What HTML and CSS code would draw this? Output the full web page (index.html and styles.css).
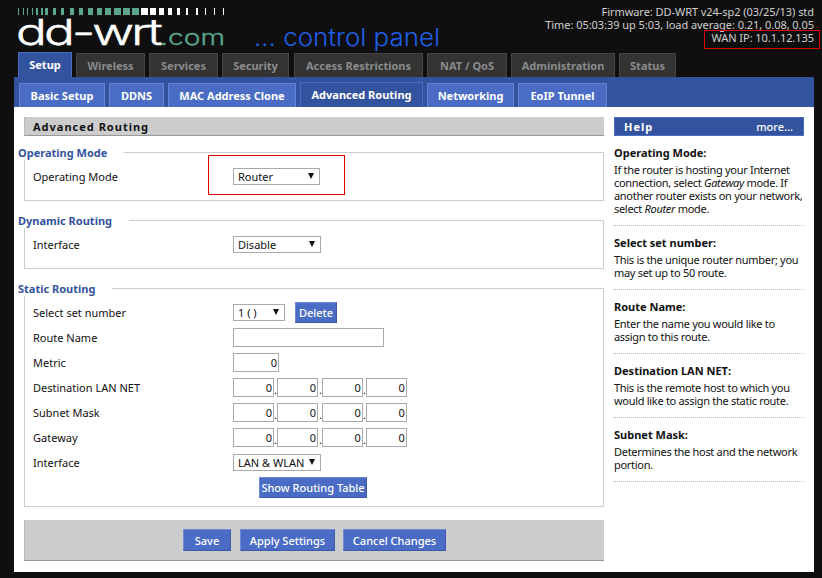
FILE: index.html
```html
<!DOCTYPE html>
<html lang="en">
  <head>
    <meta charset="UTF-8" />
    <title>DD-WRT Advanced Routing</title>
    <link rel="stylesheet" href="styles.css">
  </head>
  <body>
    <div class="wrapper">
      <div class="header">
        <svg class="logo" width="450" height="52" viewBox="0 0 450 52">
          <g fill="#5aa58c">
            <rect x="18" y="8" width="1" height="7"/><rect x="23" y="8" width="1" height="7"/><rect x="27" y="8" width="1" height="7"/><rect x="32" y="8" width="1" height="7"/><rect x="36" y="8" width="2" height="7"/><rect x="41" y="8" width="2" height="7"/><rect x="45" y="8" width="3" height="7"/><rect x="53" y="8" width="3" height="7"/><rect x="61" y="8" width="3" height="7"/><rect x="70" y="8" width="4" height="7"/><rect x="79" y="8" width="4" height="7"/><rect x="88" y="8" width="5" height="7"/><rect x="97" y="8" width="5" height="7"/><rect x="105" y="8" width="6" height="7"/><rect x="114" y="8" width="7" height="7"/><rect x="123" y="8" width="7" height="7"/><rect x="132" y="8" width="7" height="7"/>
          </g>
          <g fill="#fff">
            <rect x="141" y="8" width="7" height="7"/><rect x="150" y="8" width="6" height="7"/><rect x="159" y="8" width="5" height="7"/><rect x="168" y="8" width="4" height="7"/><rect x="177" y="8" width="3" height="7"/><rect x="186" y="8" width="2" height="7"/><rect x="196" y="8" width="2" height="7"/><rect x="205" y="8" width="1" height="7"/><rect x="214" y="8" width="1" height="7"/><rect x="223" y="8" width="1" height="7"/>
          </g>
          <text class="logo-name" x="16" y="45" textLength="144" lengthAdjust="spacingAndGlyphs">dd-wrt</text>
          <text class="logo-com" x="160" y="45" textLength="65" lengthAdjust="spacingAndGlyphs">.com</text>
          <text class="logo-panel" x="254" y="46" textLength="186" lengthAdjust="spacingAndGlyphs">... control panel</text>
        </svg>
        <div class="info">
          <div>Firmware: DD-WRT v24-sp2 (03/25/13) std</div>
          <div>Time: 05:03:39 up 5:03, load average: 0.21, 0.08, 0.05</div>
          <div class="wan">WAN IP: 10.1.12.135</div>
        </div>
      </div>

      <div class="tabs">
        <a class="tab current">Setup</a>
        <a class="tab w69">Wireless</a>
        <a class="tab w69">Services</a>
        <a class="tab w66">Security</a>
        <a class="tab w129">Access Restrictions</a>
        <a class="tab w80">NAT / QoS</a>
        <a class="tab w104">Administration</a>
        <a class="tab w57">Status</a>
      </div>

      <div class="content">
        <div class="subtabs">
          <a class="subtab">Basic Setup</a>
          <a class="subtab">DDNS</a>
          <a class="subtab">MAC Address Clone</a>
          <a class="subtab current">Advanced Routing</a>
          <a class="subtab">Networking</a>
          <a class="subtab">EoIP Tunnel</a>
        </div>

        <div class="panes">
          <div class="main">
            <h2>Advanced Routing</h2>

            <fieldset class="short">
              <legend>Operating Mode</legend>
              <div class="row">
                <span class="label">Operating Mode</span>
                <span class="select s112">Router</span>
                <span class="highlight"></span>
              </div>
            </fieldset>

            <fieldset class="short">
              <legend>Dynamic Routing</legend>
              <div class="row">
                <span class="label">Interface</span>
                <span class="select s88">Disable</span>
              </div>
            </fieldset>

            <fieldset class="static">
              <legend>Static Routing</legend>
              <div class="row">
                <span class="label">Select set number</span>
                <span class="select s52">1 ( )</span>
                <button class="btn delete">Delete</button>
              </div>
              <div class="row">
                <span class="label">Route Name</span>
                <input class="field w151" value="">
              </div>
              <div class="row">
                <span class="label">Metric</span>
                <input class="field w46" value="0">
              </div>
              <div class="row">
                <span class="label">Destination LAN NET</span>
                <span class="ip"><input class="field" value="0">.<input class="field" value="0">.<input class="field" value="0">.<input class="field" value="0"></span>
              </div>
              <div class="row">
                <span class="label">Subnet Mask</span>
                <span class="ip"><input class="field" value="0">.<input class="field" value="0">.<input class="field" value="0">.<input class="field" value="0"></span>
              </div>
              <div class="row">
                <span class="label">Gateway</span>
                <span class="ip"><input class="field" value="0">.<input class="field" value="0">.<input class="field" value="0">.<input class="field" value="0"></span>
              </div>
              <div class="row">
                <span class="label">Interface</span>
                <span class="select s88">LAN &amp; WLAN</span>
              </div>
              <div class="table-btn"><button class="btn">Show Routing Table</button></div>
            </fieldset>

            <div class="footer">
              <button class="btn save">Save</button>
              <button class="btn apply">Apply Settings</button>
              <button class="btn cancel">Cancel Changes</button>
            </div>
          </div>

          <div class="help">
            <div class="help-head"><span>Help</span><a>more...</a></div>
            <dl>
              <dt>Operating Mode:</dt>
              <dd>If the router is hosting your Internet connection, select <em>Gateway</em> mode. If another router exists on your network, select <em>Router</em> mode.</dd>
              <dt>Select set number:</dt>
              <dd>This is the unique router number; you may set up to 50 route.</dd>
              <dt>Route Name:</dt>
              <dd>Enter the name you would like to assign to this route.</dd>
              <dt>Destination LAN NET:</dt>
              <dd>This is the remote host to which you would like to assign the static route.</dd>
              <dt>Subnet Mask:</dt>
              <dd>Determines the host and the network portion.</dd>
            </dl>
          </div>
        </div>
      </div>
    </div>
  </body>
</html>
```

FILE: styles.css
```css
*{
  box-sizing: border-box;
}
html, body{
  height: 100%;
}
body{
  margin: 0;
  background-color: #0f0f0f;
  font-family: "Noto Sans", "DejaVu Sans", sans-serif;
  font-size: 11px;
  color: #111;
  overflow: hidden;
}
.wrapper{
  width: 822px;
  height: 578px;
}

/* header */
.header{
  height: 52px;
  display: flex;
  justify-content: space-between;
}
.logo{
  display: block;
}
.logo text{
  font-family: "Inter", sans-serif;
  font-weight: 300;
}
.logo-name{
  fill: #fff;
  stroke: #fff;
  stroke-width: 0.5px;
  font-size: 36px;
  letter-spacing: -2px;
}
.logo-com{
  fill: #5aa58c;
  stroke: #5aa58c;
  stroke-width: 0.3px;
  font-size: 21px;
}
.logo-panel{
  fill: #1f5fe8;
  font-size: 24px;
}
.info{
  padding: 5px 8px 0 0;
  text-align: right;
  color: #cfcfcf;
  font-size: 11px;
  line-height: 13px;
  letter-spacing: -0.05px;
  position: relative;
}
.wan::after{
  content: "";
  position: absolute;
  right: 2px;
  top: 30px;
  width: 114px;
  height: 17px;
  border: 1px solid #e00000;
}

/* tabs */
.tabs{
  height: 25px;
  display: flex;
  align-items: flex-end;
  gap: 4px;
  padding-left: 18px;
}
.tab{
  height: 24px;
  line-height: 24px;
  text-align: center;
  background-color: #333;
  border: 1px solid #444;
  border-bottom: none;
  color: #8c8c8c;
  font-weight: 700;
}
.tab.current{
  width: 54px;
  height: 25px;
  background-color: #34539e;
  border-color: #4a6cc4;
  color: #fff;
}
.w69{ width: 69px; }
.w66{ width: 67px; margin-right: 1px; }
.w129{ width: 129px; }
.w80{ width: 80px; }
.w104{ width: 104px; }
.w57{ width: 57px; }

.content{
  margin-left: 14px;
  width: 800px;
  height: 495px;
  background-color: #fff;
}
.subtabs{
  height: 30px;
  background-color: #34539e;
  display: flex;
  align-items: flex-end;
  gap: 4px;
  padding-left: 5px;
}
.subtab{
  height: 24px;
  line-height: 24px;
  padding: 0 5px;
  text-align: center;
  background-color: #4a6cc4;
  border: 1px solid #6585d4;
  border-bottom: none;
  color: #fff;
  font-weight: 700;
}
.subtab:nth-child(1){ width: 86px; }
.subtab:nth-child(2){ width: 55px; }
.subtab:nth-child(3){ width: 128px; }
.subtab:nth-child(4){ width: 123px; height: 25px; background-color: #34539e; border-color: #4a6cc4; line-height: 23px; }
.subtab:nth-child(5){ width: 87px; }
.subtab:nth-child(6){ width: 89px; }

.panes{
  display: flex;
  padding: 10px 0 0 10px;
}
.main{
  width: 580px;
}
h2{
  margin: 0;
  height: 19px;
  line-height: 19px;
  padding-left: 8px;
  background-color: #ccc;
  border-bottom: 1px solid #999;
  border-left: 1px solid #bbb;
  font-size: 11px;
  font-weight: 700;
  letter-spacing: 1px;
}

fieldset{
  margin: 0;
  padding: 4px 0 0 8px;
  border: 1px solid #ccc;
  border-radius: 0;
}
legend{
  margin-left: -15px;
  padding: 2px 17px 0 0;
  background-color: #fff;
  color: #34539e;
  font-weight: 700;
  line-height: 14px;
}
fieldset.short{
  height: 57px;
  margin-bottom: 11px;
}
fieldset.short:first-of-type{
  margin-top: 8px;
}
fieldset.static{
  height: 227px;
}
.row{
  position: relative;
  height: 25px;
  display: flex;
  align-items: center;
}
.label{
  width: 200px;
}
.select{
  position: relative;
  display: block;
  height: 17px;
  line-height: 15px;
  padding-left: 4px;
  border: 1px solid #aaa;
  background-color: #fff;
}
.select::after{
  content: "";
  position: absolute;
  right: 5px;
  top: 4px;
  border-left: 3px solid transparent;
  border-right: 3px solid transparent;
  border-top: 6px solid #111;
}
.s112{ width: 87px; }
.s88{ width: 88px; }
.s52{ width: 52px; }
.highlight{
  position: absolute;
  left: 175px;
  top: -9px;
  width: 137px;
  height: 40px;
  border: 1px solid #e00000;
}
.field{
  height: 19px;
  padding: 0 1px;
  border: 1px solid #aaa;
  background-color: #fff;
  font: inherit;
  color: #111;
  text-align: right;
  outline: none;
}
.w151{ width: 151px; }
.w46{ width: 46px; }
.ip{
  display: flex;
  align-items: flex-end;
  line-height: 14px;
}
.ip .field{
  width: 41px;
}
.ip .field:nth-of-type(2){
  margin-right: 1px;
}

.btn{
  height: 21px;
  padding: 0;
  border: 1px solid;
  border-color: #6f8bd6 #3a5aa8 #3a5aa8 #6f8bd6;
  background-color: #4a6cc4;
  color: #fff;
  font: inherit;
  font-weight: 500;
}
.delete{
  width: 42px;
  margin-left: 10px;
}
.table-btn{
  padding: 2px 0 0 226px;
}
.table-btn .btn{
  width: 108px;
}

.footer{
  margin-top: 13px;
  height: 41px;
  display: flex;
  align-items: center;
  padding-left: 158px;
  background-color: #ccc;
  border-bottom: 1px solid #999;
  border-left: 1px solid #bbb;
}
.footer .btn{
  height: 22px;
}
.save{ width: 48px; margin-right: 9px; }
.apply{ width: 95px; margin-right: 8px; }
.cancel{ width: 103px; }

/* help */
.help{
  width: 190px;
  margin-left: 10px;
}
.help-head{
  height: 19px;
  line-height: 17px;
  padding: 0 10px 0 9px;
  display: flex;
  justify-content: space-between;
  background-color: #34539e;
  border: 1px solid #4a6cc4;
  color: #fff;
  font-weight: 500;
}
.help-head span{
  font-weight: 700;
  letter-spacing: 1px;
}
dl{
  margin: 10px 0 0;
}
dt{
  font-weight: 700;
  line-height: 14px;
  margin-bottom: 3px;
}
dd{
  margin: 0 0 10px;
  padding-bottom: 10px;
  border-bottom: 1px dotted #bbb;
  line-height: 13px;
  letter-spacing: -0.3px;
}
```
